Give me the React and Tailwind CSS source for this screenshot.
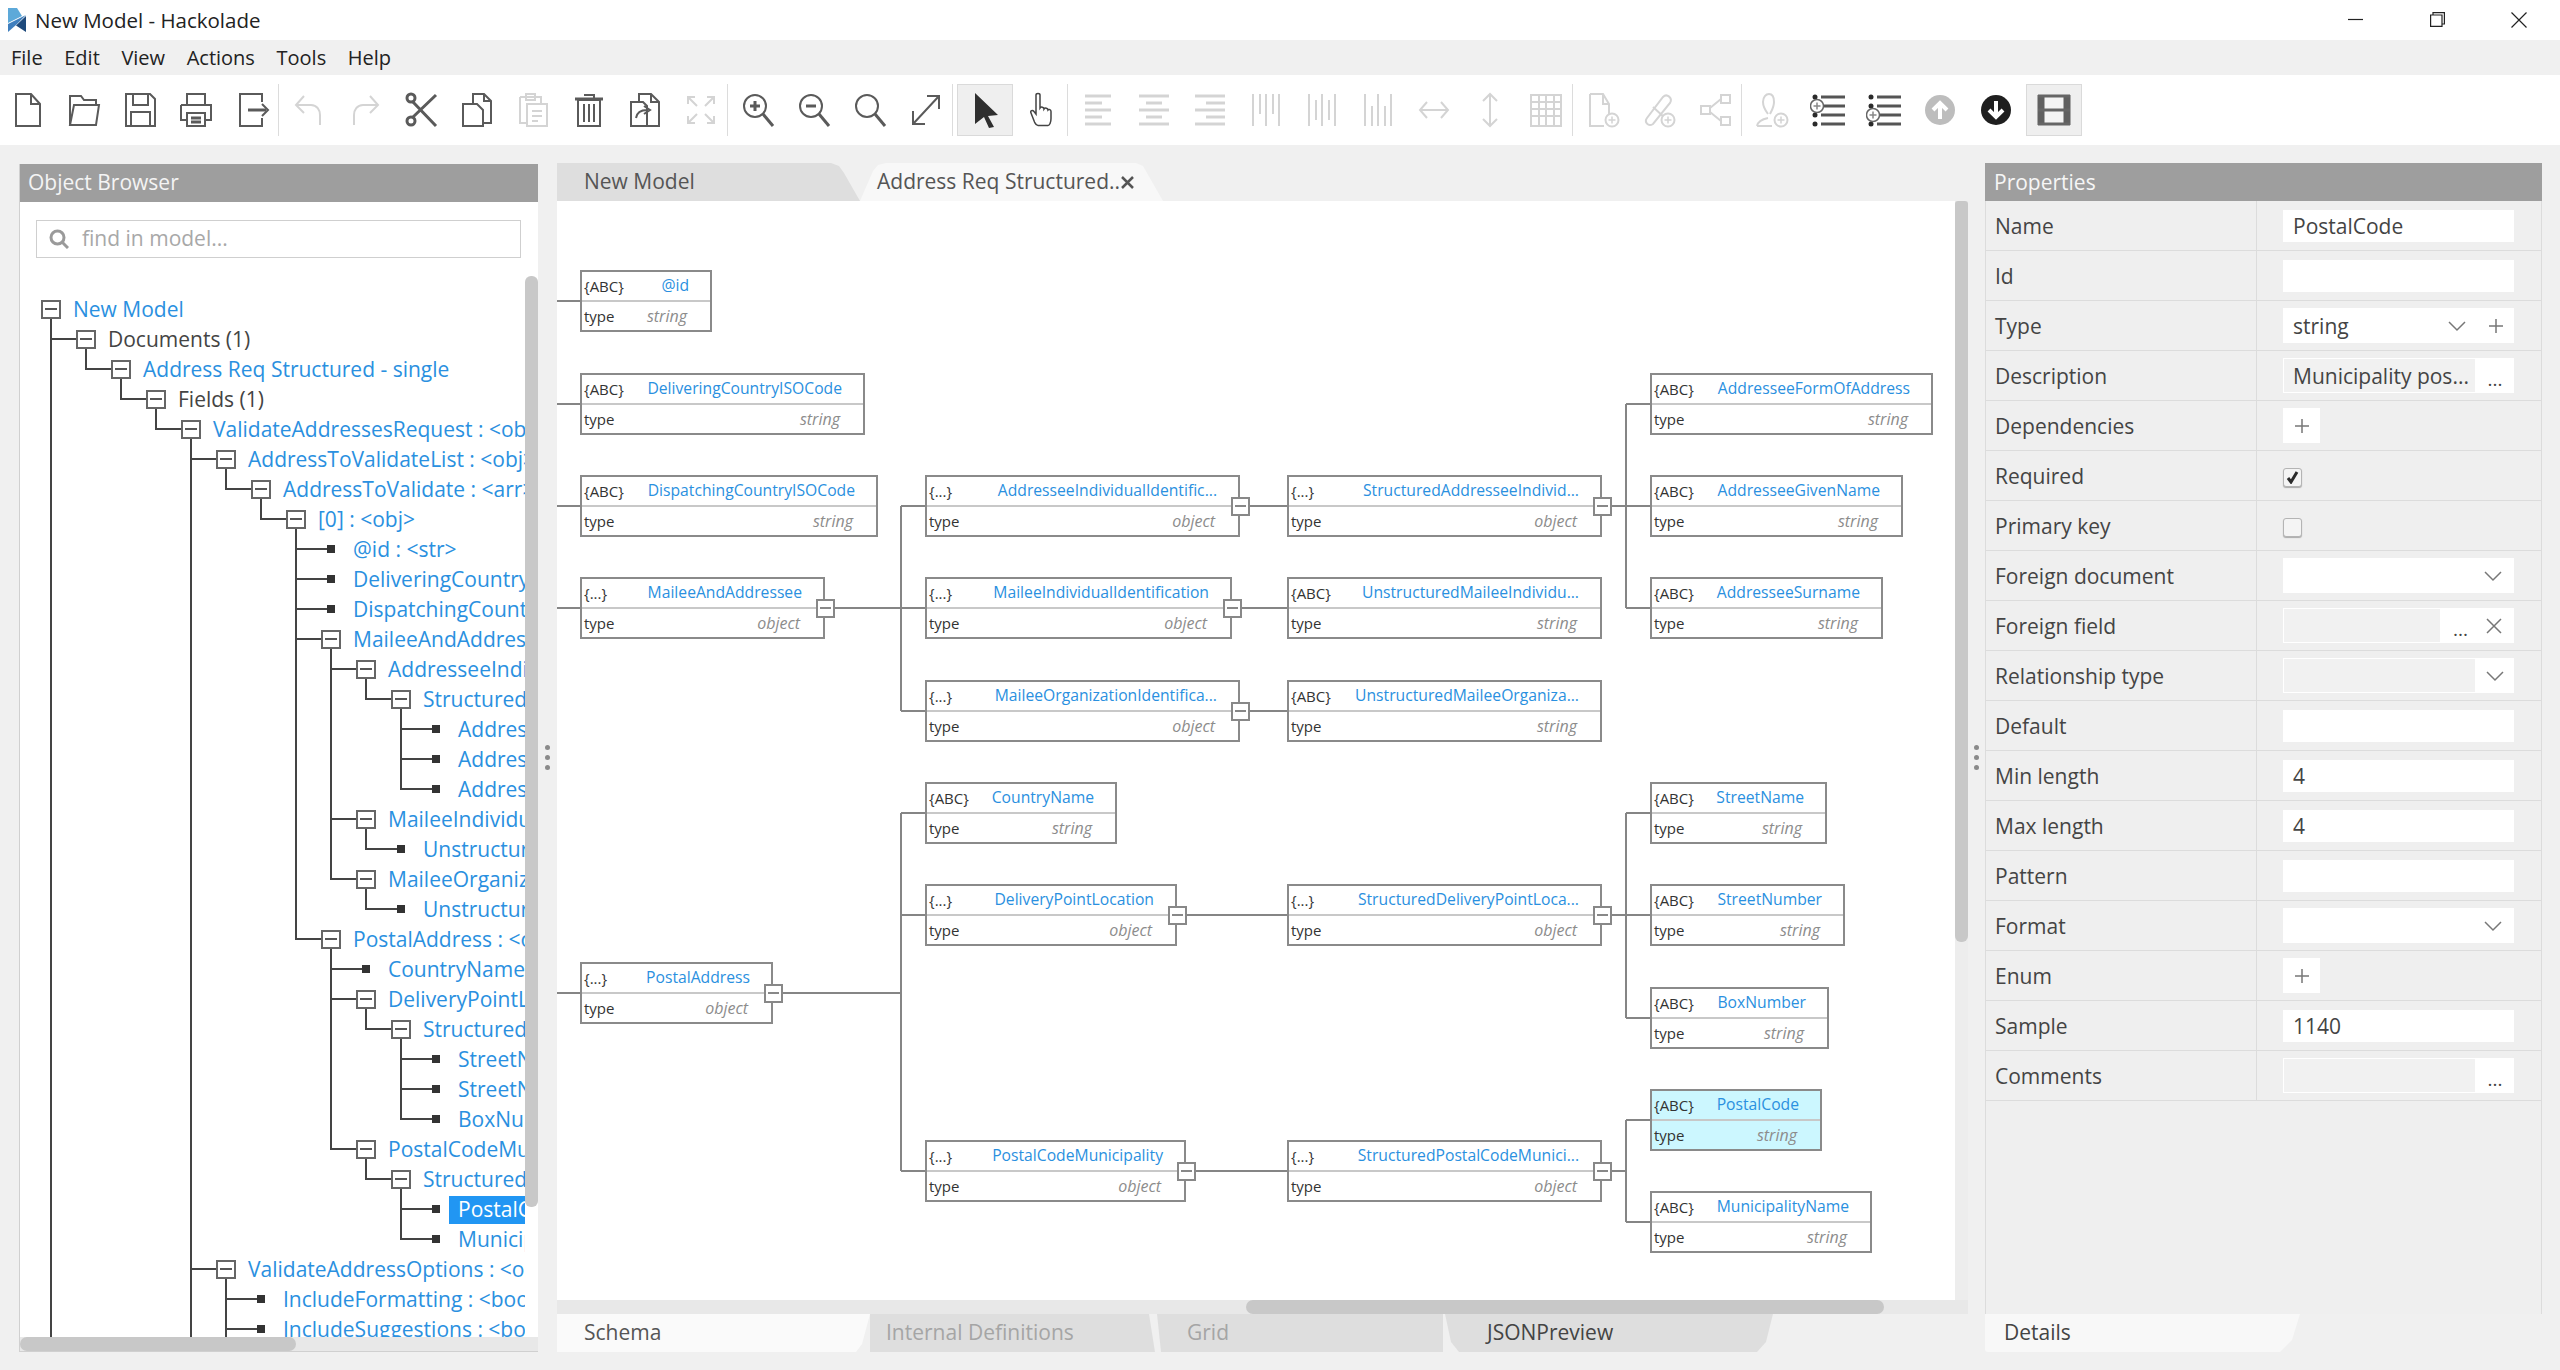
import React from 'react';

const ON = '#5a5a5a';
const OFF = '#d4d4d4';

const Ico = ({ children, c = ON, w = 2 }) => (
  <svg width="36" height="36" viewBox="0 0 36 36" fill="none" stroke={c} strokeWidth={w}>
    {children}
  </svg>
);

const bars = (rows) => rows.map(([x1, x2, y], i) => <path key={i} d={`M${x1} ${y}H${x2}`} />);

const AddDot = ({ c = OFF }) => (
  <>
    <circle cx="27" cy="28" r="6.5" fill="#fff" />
    <path d="M27 24.5v7M23.5 28h7" stroke={c} strokeWidth="1.5" />
  </>
);

const ListIcon = ({ y }) => (
  <svg width="36" height="36" viewBox="0 0 36 36" fill="none">
    <path d="M11 5h24M11 14h24M11 23h24M11 32h24" stroke="#555" strokeWidth="3" />
    <circle cx="5" cy="5" r="2.5" fill="#2a2a2a" />
    <circle cx="5" cy="14" r="2.5" fill="#2a2a2a" />
    <circle cx="5" cy="23" r="2.5" fill="#2a2a2a" />
    <circle cx="5" cy="32" r="2.5" fill="#2a2a2a" />
    <circle cx="7" cy={y} r="6.5" fill="#fff" stroke="#666" strokeWidth="1.5" />
    <path d={`M3.5 ${y}h7M7 ${y - 3.5}v7`} stroke="#888" strokeWidth="1.5" />
  </svg>
);

const icons = {
  file: <Ico><path d="M6 2h15l9 10v22H6z" /><path d="M21 2v10h9" /></Ico>,
  folder: <Ico><path d="M4 33V4h11l3 4h12v5" /><path d="M4 33h26l3-20H8z" fill="none" /></Ico>,
  save: <Ico><path d="M4 2h24l5 5v27H4z" /><path d="M11 2v11h15V2" /><path d="M9 34V20h19v14" /></Ico>,
  print: <Ico><path d="M9 13V2h18v11" /><path d="M3 13h30v15h-6M9 28H3V13" /><path d="M9 21h18v13H9z" /><path d="M13 26h10M13 30h10" strokeWidth="3" /></Ico>,
  exportDoc: <Ico><path d="M28 10V2H6v32h22v-8" /><path d="M14 18h18" strokeWidth="3" /><path d="M28 12l6 6-6 6" /></Ico>,
  undo: <Ico c={OFF}><path d="M13 4L5 13l8 8" /><path d="M5 13h15c6 0 9 5 9 10v10" /></Ico>,
  redo: <Ico c={OFF}><path d="M23 4l8 9-8 8" /><path d="M31 13H16c-6 0-9 5-9 10v10" /></Ico>,
  cut: <Ico w={3}><circle cx="8" cy="6" r="4" /><circle cx="8" cy="29" r="4" /><path d="M10 10l23 24M10 25L33 3" /></Ico>,
  copy: <Ico><path d="M4 12h14l6 6v16H4z" /><path d="M14 12V2h11l7 7v22h-8" /><path d="M25 2v7h7" /></Ico>,
  paste: <Ico c={OFF}><path d="M5 5h21v6M5 5v26h7" /><path d="M11 2h9v6h-9z" /><path d="M12 12h20v22H12z" /><path d="M17 19h10M17 24h10M17 29h6" /></Ico>,
  trash: <Ico><path d="M7 8h22v26H7z" /><path d="M4 7h28" strokeWidth="3" /><path d="M13 3h10v4M13 12v18M18 12v18M23 12v18" /></Ico>,
  pasteSpecial: <Ico><path d="M4 10h12l4 4v20H4z" /><path d="M12 10V2h12l8 8v24H20" /><path d="M24 2v8h8" /><path d="M9 26c1-6 6-8 11-8M17 14l6 4-6 4" /></Ico>,
  fit: <Ico c={OFF}><path d="M5 5l9 9M5 12V5h7M31 5l-9 9M31 12V5h-7M5 31l9-9M5 24v7h7M31 31l-9-9M31 24v7h-7" /></Ico>,
  zoomIn: <Ico><circle cx="15" cy="14" r="11" /><path d="M23 22l10 12" strokeWidth="3" /><path d="M15 9v10M10 14h10" strokeWidth="3" /></Ico>,
  zoomOut: <Ico><circle cx="15" cy="14" r="11" /><path d="M23 22l10 12" strokeWidth="3" /><path d="M10 14h10" strokeWidth="3" /></Ico>,
  search: <Ico><circle cx="15" cy="14" r="11" /><path d="M23 22l10 12" strokeWidth="3" /></Ico>,
  expand: <Ico><path d="M5 32L31 4M19 4h12v13M5 19v13h12" /></Ico>,
  arrow: <svg width="36" height="36" viewBox="0 0 36 36"><path d="M8 1l23 22-10 1 6 11-5 1-5-11-9 7z" fill="#2f2f2f" /></svg>,
  hand: <Ico c="#444" w={1.5}><path d="M13 3c0-2 4-2 4 0v13c1-1.500 4-1 4 1 1-1.500 4-1 4 1 1-1 3-.5 3 1.500v7c0 4-1.500 7-3 7H15c-2 0-2.500-1.500-3.500-3.500L8 21c-1-2.500 1.500-3.500 3-1.500l2 2.500z" /></Ico>,
  alignLeft: <Ico c={OFF} w={3}>{bars([[5, 31, 4], [5, 22, 11], [5, 31, 18], [5, 22, 25], [5, 31, 32]])}</Ico>,
  alignCenter: <Ico c={OFF} w={3}>{bars([[3, 33, 4], [10, 26, 11], [3, 33, 18], [10, 26, 25], [3, 33, 32]])}</Ico>,
  alignRight: <Ico c={OFF} w={3}>{bars([[3, 33, 4], [14, 33, 11], [3, 33, 18], [14, 33, 25], [3, 33, 32]])}</Ico>,
  topAlign: <Ico c={OFF}><path d="M5 2v32M12 2v20M18 2v32M25 2v20M31 2v32" /></Ico>,
  midAlign: <Ico c={OFF}><path d="M5 2v32M12 8v20M18 2v32M25 8v20M31 2v32" /></Ico>,
  botAlign: <Ico c={OFF}><path d="M5 2v32M12 14v20M18 2v32M25 14v20M31 2v32" /></Ico>,
  widthEq: <Ico c={OFF}><path d="M4 18h28M11 10l-7 8 7 8M25 10l7 8-7 8" /></Ico>,
  heightEq: <Ico c={OFF}><path d="M18 2v32M11 9l7-7 7 7M11 27l7 7 7-7" /></Ico>,
  grid: <Ico c={OFF}><path d="M3 3h30v31H3zM3 10h30M3 17h30M3 24h30M11 3v31M18 3v31M26 3v31" /></Ico>,
  docAdd: <Ico c={OFF}><path d="M5 2h13l6 10v14M5 2v32h14" /><path d="M18 2v10h6" /><AddDot /></Ico>,
  linkAdd: <Ico c={OFF}><path d="M6 26L22 5c4-4 10 1 7 6L12 32c-5 3-9-2-6-6z" /><path d="M12 15l12 11" /><AddDot /></Ico>,
  shareNodes: <Ico c={OFF}><path d="M4 14h9v8H4zM24 3h9v8h-9zM24 25h9v8h-9z" /><path d="M13 16l11-9M13 20l11 9" /></Ico>,
  userAdd: <Ico c={OFF}><path d="M14 22c-3-4-5-8-5-12 0-5 3-8 6-8s5 3 5 8-2 8-4 12M3 34c1-5 6-7 11-8M3 34h15" /><AddDot /></Ico>,
  listTop: <ListIcon y={14} />,
  listBot: <ListIcon y={23} />,
  up: <svg width="36" height="36" viewBox="0 0 36 36"><circle cx="18" cy="18" r="15" fill="#bdbdbd" /><path d="M18 27V12M11 18l7-7 7 7" stroke="#fff" strokeWidth="4" fill="none" /></svg>,
  down: <svg width="36" height="36" viewBox="0 0 36 36"><circle cx="18" cy="18" r="15" fill="#1f1f1f" /><path d="M18 9v15M11 18l7 7 7-7" stroke="#fff" strokeWidth="4" fill="none" /></svg>,
  layout: (
    <svg width="36" height="36" viewBox="0 0 36 36" fill="none">
      <path d="M5 5h26v27H5z" fill="#f4f4f4" />
      <path d="M5 3v30M31 3v30" stroke="#606060" strokeWidth="7" />
      <path d="M2 4h32M2 32h32M2 18h32" stroke="#666" strokeWidth="3" />
    </svg>
  ),
};

const toolbar = [
  ['file', 'folder', 'save', 'print', 'exportDoc'],
  ['undo', 'redo', 'cut', 'copy', 'paste', 'trash', 'pasteSpecial', 'fit'],
  ['zoomIn', 'zoomOut', 'search', 'expand'],
  ['arrow', 'hand'],
  ['alignLeft', 'alignCenter', 'alignRight', 'topAlign', 'midAlign', 'botAlign', 'widthEq', 'heightEq', 'grid'],
  ['docAdd', 'linkAdd', 'shareNodes'],
  ['userAdd', 'listTop', 'listBot', 'up', 'down', 'layout'],
];
const activeTools = ['arrow', 'layout'];

const Toolbar = () => (
  <div className="flex h-[70px] items-center bg-white">
    {toolbar.map((group, g) => (
      <React.Fragment key={g}>
        {g > 0 && <div className="-ml-[2px] mr-[2px] h-[52px] w-px bg-[#dcdcdc]" />}
        {group.map((name) => (
          <div
            key={name}
            className={
              activeTools.includes(name)
                ? 'ml-[2px] flex h-[52px] w-[56px] items-center justify-center border border-[#dadada] bg-[#efefef]'
                : 'flex h-[52px] w-[56px] items-center justify-center'
            }
          >
            {icons[name]}
          </div>
        ))}
      </React.Fragment>
    ))}
  </div>
);

const treeRows = [
  [0, 'New Model'],
  [1, 'Documents (1)', true],
  [2, 'Address Req Structured - single'],
  [3, 'Fields (1)', true],
  [4, 'ValidateAddressesRequest : <obj>'],
  [5, 'AddressToValidateList : <obj>'],
  [6, 'AddressToValidate : <arr>'],
  [7, '[0] : <obj>'],
  [8, '@id : <str>'],
  [8, 'DeliveringCountryISOCode : <str>'],
  [8, 'DispatchingCountryISOCode : <str>'],
  [8, 'MaileeAndAddressee : <obj>'],
  [9, 'AddresseeIndividualIdentification'],
  [10, 'StructuredAddresseeIndividual'],
  [11, 'AddresseeFormOfAddress'],
  [11, 'AddresseeGivenName'],
  [11, 'AddresseeSurname'],
  [9, 'MaileeIndividualIdentification'],
  [10, 'UnstructuredMaileeIndividual'],
  [9, 'MaileeOrganizationIdentification'],
  [10, 'UnstructuredMaileeOrganization'],
  [8, 'PostalAddress : <obj>'],
  [9, 'CountryName : <str>'],
  [9, 'DeliveryPointLocation : <obj>'],
  [10, 'StructuredDeliveryPointLocation'],
  [11, 'StreetName : <str>'],
  [11, 'StreetNumber : <str>'],
  [11, 'BoxNumber : <str>'],
  [9, 'PostalCodeMunicipality : <obj>'],
  [10, 'StructuredPostalCodeMunicipality'],
  [11, 'PostalCode : <str>'],
  [11, 'MunicipalityName : <str>'],
  [5, 'ValidateAddressOptions : <obj>'],
  [6, 'IncludeFormatting : <bool>'],
  [6, 'IncludeSuggestions : <bool>'],
];
const SELECTED = 30;
const TREE_H = 1062;
const rowY = (i) => 33 + 30 * i;
const levelX = (l) => 31 + 35 * l;
const isBranch = (i) => i < treeRows.length - 1 && treeRows[i + 1][0] > treeRows[i][0];

const TreeLines = () => {
  const out = [];
  treeRows.forEach(([lvl], i) => {
    const x = levelX(lvl);
    const y = rowY(i);
    if (lvl > 0) {
      let p = i - 1;
      while (treeRows[p][0] !== lvl - 1) p--;
      const px = levelX(lvl - 1);
      out.push(<path key={`v${i}`} d={`M${px} ${rowY(p)}V${y}H${x}`} stroke="#444" strokeWidth="2" fill="none" />);
    }
  });
  [0, 4, 32].forEach((i) => {
    const x = levelX(treeRows[i][0]);
    out.push(<path key={`c${i}`} d={`M${x} ${rowY(i)}V${TREE_H}`} stroke="#444" strokeWidth="2" />);
  });
  treeRows.forEach(([lvl], i) => {
    const x = levelX(lvl);
    const y = rowY(i);
    if (isBranch(i)) {
      out.push(
        <g key={`b${i}`}>
          <rect x={x - 9} y={y - 8} width="18" height="17" fill="#fff" stroke="#666" strokeWidth="2" />
          <path d={`M${x - 6} ${y}h12`} stroke="#555" strokeWidth="2" />
        </g>
      );
    } else {
      out.push(<rect key={`l${i}`} x={x - 4} y={y - 4} width="8" height="8" fill="#333" />);
    }
  });
  return (
    <svg className="absolute left-0 top-0" width="505" height={TREE_H}>
      {out}
    </svg>
  );
};

const ObjectBrowser = () => (
  <div className="mt-px flex w-[519px] flex-col border-b border-l border-[#d0d0d0] bg-white">
    <div className="flex h-[38px] items-center bg-[#9e9e9e] pl-[8px] text-[21px] text-[#f4f4f4]">Object Browser</div>
    <div className="h-[74px] px-[16px] pt-[18px]">
      <div className="flex h-[38px] w-[485px] items-center border border-[#cfcfcf] pl-[12px]">
        <svg width="20" height="20" viewBox="0 0 20 20" fill="none" stroke="#9a9a9a" strokeWidth="3">
          <circle cx="8.5" cy="8.5" r="6.5" />
          <path d="M13 13l6 6" />
        </svg>
        <span className="ml-[13px] text-[21px] text-[#a8a8a8]">find in model...</span>
      </div>
    </div>
    <div className="flex min-h-0 flex-1">
      <div className="relative flex-1 overflow-hidden pt-[18px]">
        <TreeLines />
        {treeRows.map(([lvl, label, plain], i) => (
          <div
            key={i}
            className="relative flex h-[30px] items-center whitespace-nowrap pt-px text-[21px]"
            style={{ paddingLeft: 53 + 35 * lvl }}
          >
            <span
              className={
                i === SELECTED
                  ? '-ml-[9px] flex h-[28px] w-[200px] items-center bg-[#2196f3] pl-[9px] text-white'
                  : plain
                  ? 'text-[#444]'
                  : 'text-[#2a90e0]'
              }
            >
              {label}
            </span>
          </div>
        ))}
      </div>
      <div className="mb-[130px] w-[13px] rounded-b-[6px] rounded-t-[6px] bg-[#c8c8c8]" />
    </div>
    <div className="flex h-[14px] bg-[#e8e8e8]">
      <div className="w-[276px] rounded-[7px] bg-[#c8c8c8]" />
    </div>
  </div>
);

const Splitter = ({ w }) => (
  <div className={`flex flex-col items-center justify-center gap-[5px] ${w}`}>
    <div className="h-[5px] w-[5px] rounded-full bg-[#8a8a8a]" />
    <div className="h-[5px] w-[5px] rounded-full bg-[#8a8a8a]" />
    <div className="h-[5px] w-[5px] rounded-full bg-[#8a8a8a]" />
  </div>
);

const nodes = [
  { t: '{ABC}', n: '@id', v: 'string', c: 'left-[23px] top-[69px] w-[132px]' },
  { t: '{ABC}', n: 'DeliveringCountryISOCode', v: 'string', c: 'left-[23px] top-[172px] w-[285px]' },
  { t: '{ABC}', n: 'DispatchingCountryISOCode', v: 'string', c: 'left-[23px] top-[274px] w-[298px]' },
  { t: '{...}', n: 'MaileeAndAddressee', v: 'object', c: 'left-[23px] top-[376px] w-[245px]' },
  { t: '{...}', n: 'AddresseeIndividualIdentific...', v: 'object', c: 'left-[368px] top-[274px] w-[315px]' },
  { t: '{...}', n: 'MaileeIndividualIdentification', v: 'object', c: 'left-[368px] top-[376px] w-[307px]' },
  { t: '{...}', n: 'MaileeOrganizationIdentifica...', v: 'object', c: 'left-[368px] top-[479px] w-[315px]' },
  { t: '{...}', n: 'StructuredAddresseeIndivid...', v: 'object', c: 'left-[730px] top-[274px] w-[315px]' },
  { t: '{ABC}', n: 'UnstructuredMaileeIndividu...', v: 'string', c: 'left-[730px] top-[376px] w-[315px]' },
  { t: '{ABC}', n: 'UnstructuredMaileeOrganiza...', v: 'string', c: 'left-[730px] top-[479px] w-[315px]' },
  { t: '{ABC}', n: 'AddresseeFormOfAddress', v: 'string', c: 'left-[1093px] top-[172px] w-[283px]' },
  { t: '{ABC}', n: 'AddresseeGivenName', v: 'string', c: 'left-[1093px] top-[274px] w-[253px]' },
  { t: '{ABC}', n: 'AddresseeSurname', v: 'string', c: 'left-[1093px] top-[376px] w-[233px]' },
  { t: '{ABC}', n: 'CountryName', v: 'string', c: 'left-[368px] top-[581px] w-[192px]' },
  { t: '{...}', n: 'DeliveryPointLocation', v: 'object', c: 'left-[368px] top-[683px] w-[252px]' },
  { t: '{...}', n: 'StructuredDeliveryPointLoca...', v: 'object', c: 'left-[730px] top-[683px] w-[315px]' },
  { t: '{ABC}', n: 'StreetName', v: 'string', c: 'left-[1093px] top-[581px] w-[177px]' },
  { t: '{ABC}', n: 'StreetNumber', v: 'string', c: 'left-[1093px] top-[683px] w-[195px]' },
  { t: '{ABC}', n: 'BoxNumber', v: 'string', c: 'left-[1093px] top-[786px] w-[179px]' },
  { t: '{...}', n: 'PostalAddress', v: 'object', c: 'left-[23px] top-[761px] w-[193px]' },
  { t: '{...}', n: 'PostalCodeMunicipality', v: 'object', c: 'left-[368px] top-[939px] w-[261px]' },
  { t: '{...}', n: 'StructuredPostalCodeMunici...', v: 'object', c: 'left-[730px] top-[939px] w-[315px]' },
  { t: '{ABC}', n: 'PostalCode', v: 'string', c: 'left-[1093px] top-[888px] w-[172px]', on: true },
  { t: '{ABC}', n: 'MunicipalityName', v: 'string', c: 'left-[1093px] top-[990px] w-[222px]' },
];

const Node = ({ t, n, v, c, on }) => (
  <div className={`absolute h-[62px] border-2 border-[#8a8a8a] ${on ? 'bg-[#ccf7ff]' : 'bg-white'} ${c}`}>
    <div className="flex h-[30px] items-center justify-between whitespace-nowrap border-b-2 border-[#c8c8c8] pl-[2px] pr-[21px]">
      <span className="text-[15px] text-[#333]">{t}</span>
      <span className="text-[15.7px] text-[#2a90e0]">{n}</span>
    </div>
    <div className="flex h-[28px] items-center justify-between pl-[2px] pr-[23px]">
      <span className="text-[15px] text-[#333]">type</span>
      <span className="text-[16px] italic text-[#8c8c8c]">{v}</span>
    </div>
  </div>
);

const links = [
  'M0 100H23', 'M0 203H23', 'M0 305H23', 'M0 407H23', 'M0 792H23',
  'M268 407H368', 'M344 305V510', 'M344 305H368', 'M344 510H368',
  'M683 305H730', 'M675 407H730', 'M683 510H730',
  'M1045 305H1093', 'M1069 203V407', 'M1069 203H1093', 'M1069 407H1093',
  'M216 792H344', 'M344 612V970', 'M344 612H368', 'M344 714H368', 'M344 970H368',
  'M620 714H730', 'M629 970H730',
  'M1045 714H1093', 'M1069 612V817', 'M1069 612H1093', 'M1069 817H1093',
  'M1045 970H1069', 'M1069 919V1021', 'M1069 919H1093', 'M1069 1021H1093',
];
const toggles = [[268, 407], [683, 305], [675, 407], [683, 510], [1045, 305], [216, 792], [620, 714], [629, 970], [1045, 714], [1045, 970]];

const Links = () => (
  <svg className="absolute left-0 top-0" width="1398" height="1099">
    {links.map((d) => (
      <path key={d} d={d} stroke="#858585" strokeWidth="2" fill="none" />
    ))}
    {toggles.map(([x, y]) => (
      <g key={`${x}-${y}`}>
        <rect x={x - 8} y={y - 8} width="17" height="17" fill="#fff" stroke="#888" strokeWidth="2" />
        <path d={`M${x - 5} ${y}h11`} stroke="#888" strokeWidth="2" />
      </g>
    ))}
  </svg>
);

const Canvas = () => (
  <div className="flex w-[1411px] flex-col">
    <div className="flex h-[38px] text-[21px]">
      <div className="flex w-[303px] items-center bg-[#dedede] pl-[27px] text-[#555] [clip-path:polygon(0_0,274px_0,282px_3px,287px_10px,303px_100%,0_100%)]">
        New Model
      </div>
      <div className="flex w-[303px] items-center bg-[#f8f8f8] pl-[17px] text-[#555] [clip-path:polygon(0_100%,13px_8px,18px_2px,26px_0,276px_0,283px_3px,287px_10px,303px_100%)]">
        <span>Address Req Structured..</span>
        <svg className="ml-[1px]" width="13" height="13" viewBox="0 0 13 13" stroke="#555" strokeWidth="2.5">
          <path d="M1 1l11 11M12 1L1 12" />
        </svg>
      </div>
    </div>
    <div className="flex min-h-0 flex-1">
      <div className="relative w-[1398px] overflow-hidden bg-white">
        {nodes.map((node) => (
          <Node key={node.n} {...node} />
        ))}
        <Links />
      </div>
      <div className="flex w-[13px] flex-col bg-[#ededed]">
        <div className="h-[741px] rounded-b-[6px] rounded-t-[3px] bg-[#c8c8c8]" />
      </div>
    </div>
    <div className="flex h-[14px] bg-[#e8e8e8] pl-[689px]">
      <div className="w-[638px] rounded-[7px] bg-[#c8c8c8]" />
    </div>
    <div className="flex h-[38px] text-[21px]">
      <div className="flex w-[313px] items-center bg-[#fafafa] pl-[27px] text-[#555] [clip-path:polygon(0_0,100%_0,calc(100%-8px)_30px,calc(100%-14px)_100%,0_100%)]">
        Schema
      </div>
      <div className="flex w-[285px] items-center bg-[#dedede] pl-[16px] text-[#a5a5a5] [clip-path:polygon(0_0,calc(100%-6px)_0,100%_100%,-12px_100%)]">
        Internal Definitions
      </div>
      <div className="flex w-[288px] items-center bg-[#dedede] pl-[32px] text-[#a5a5a5] [clip-path:polygon(2px_0,100%_0,calc(100%+4px)_100%,6px_100%)]">
        Grid
      </div>
      <div className="flex w-[330px] items-center bg-[#dedede] pl-[44px] text-[#444] [clip-path:polygon(2px_0,100%_0,calc(100%-7px)_28px,calc(100%-16px)_100%,16px_100%,8px_28px)]">
        JSONPreview
      </div>
    </div>
  </div>
);

const Chevron = () => (
  <svg width="18" height="12" viewBox="0 0 18 12" fill="none" stroke="#777" strokeWidth="1.5">
    <path d="M1 2l8 8 8-8" />
  </svg>
);
const Plus = () => (
  <svg width="16" height="16" viewBox="0 0 16 16" fill="none" stroke="#777" strokeWidth="1.5">
    <path d="M8 1v14M1 8h14" />
  </svg>
);
const Dots = () => <span className="flex h-full items-end pb-[4px] text-[19px] leading-none text-[#444]">...</span>;

const Box = ({ children }) => (
  <div className="flex h-[35px] w-[231px] items-center bg-white pl-[10px]">{children}</div>
);
const TextInput = ({ value, h = 'h-[32px]' }) => (
  <div className={`flex w-[231px] items-center bg-white pl-[10px] pt-[2px] ${h}`}>{value}</div>
);
const GrayField = ({ value, right, inner = 'w-[193px]' }) => (
  <div className="flex h-[35px] w-[231px] bg-white">
    <div className={`flex h-full items-center overflow-hidden whitespace-nowrap border border-white bg-[#f1f1f1] pl-[9px] pt-[2px] ${inner}`}>{value}</div>
    <div className="flex flex-1 items-center justify-center gap-[18px]">{right}</div>
  </div>
);
const Check = ({ checked }) => (
  <div className="mt-[3px] flex h-[19px] w-[19px] items-center justify-center rounded-[3px] border border-[#b4b4b4] bg-[#f4f4f4] shadow-[0_1px_1px_#aaa]">
    {checked && (
      <svg width="13" height="13" viewBox="0 0 13 13" fill="none" stroke="#2c2c2c" strokeWidth="3">
        <path d="M2 7l3 4 6-10" />
      </svg>
    )}
  </div>
);
const AddBtn = () => (
  <div className="flex h-[35px] w-[37px] items-center justify-center bg-white">
    <Plus />
  </div>
);

const props = [
  ['Name', <TextInput value="PostalCode" />],
  ['Id', <TextInput />],
  ['Type', (
    <Box>
      <span className="pt-[2px]">string</span>
      <span className="ml-auto mr-[22px] flex items-center"><Chevron /></span>
      <span className="mr-[10px] flex items-center"><Plus /></span>
    </Box>
  )],
  ['Description', <GrayField value="Municipality pos..." right={<Dots />} />],
  ['Dependencies', <AddBtn />],
  ['Required', <Check checked />],
  ['Primary key', <Check />],
  ['Foreign document', <Box><span className="ml-auto mr-[12px] flex"><Chevron /></span></Box>],
  ['Foreign field', (
    <GrayField
      inner="w-[158px]"
      right={
        <>
          <Dots />
          <svg width="16" height="16" viewBox="0 0 16 16" fill="none" stroke="#777" strokeWidth="1.5"><path d="M1 1l14 14M15 1L1 15" /></svg>
        </>
      }
    />
  )],
  ['Relationship type', <GrayField right={<Chevron />} />],
  ['Default', <TextInput />],
  ['Min length', <TextInput value="4" />],
  ['Max length', <TextInput value="4" />],
  ['Pattern', <TextInput />],
  ['Format', <Box><span className="ml-auto mr-[12px] flex"><Chevron /></span></Box>],
  ['Enum', <AddBtn />],
  ['Sample', <TextInput value="1140" />],
  ['Comments', <GrayField right={<Dots />} />],
];

const Properties = () => (
  <div className="flex w-[557px] flex-col text-[21px] text-[#444]">
    <div className="flex h-[38px] items-center bg-[#9e9e9e] pl-[9px] pt-[1px] text-[#f6f6f6]">Properties</div>
    <div className="flex-1 border-x border-[#dcdcdc] bg-[#efefef]">
      {props.map(([label, field]) => (
        <div key={label} className="flex h-[50px] border-b border-[#dcdcdc]">
          <div className="flex w-[271px] items-center border-r border-[#dcdcdc] pl-[9px] pt-[2px]">{label}</div>
          <div className="flex flex-1 items-center pl-[26px]">{field}</div>
        </div>
      ))}
    </div>
    <div className="flex h-[38px] w-[315px] items-center rounded-bl-[3px] bg-[#f8f8f8] pl-[19px] [clip-path:polygon(0_0,100%_0,calc(100%-8px)_26px,calc(100%-20px)_100%,0_100%)]">
      Details
    </div>
  </div>
);

const Logo = () => (
  <svg width="18" height="24" viewBox="0 0 18 24">
    <path d="M0 0h9l5 8L0 15z" fill="#5da9d9" />
    <path d="M0 16L18 7 8 17 0 24z" fill="#3f7fbe" />
    <path d="M8 17.500L18 8v16z" fill="#1e4a7c" />
  </svg>
);

export default function App() {
  return (
    <div className="flex h-[1370px] w-[2560px] flex-col overflow-hidden bg-[#f0f0f0] font-['Open_Sans',sans-serif] text-[#444]">
      <div className="flex h-[40px] items-center bg-white pl-[8px] text-[20.5px] text-[#222]">
        <Logo />
        <span className="ml-[9px]">New Model - Hackolade</span>
        <div className="ml-auto flex">
          <div className="flex w-[82px] justify-center">
            <svg width="15" height="15" viewBox="0 0 15 15" stroke="#222" strokeWidth="1.2"><path d="M0 7.5h15" /></svg>
          </div>
          <div className="flex w-[82px] justify-center">
            <svg width="15" height="15" viewBox="0 0 15 15" fill="none" stroke="#222" strokeWidth="1.2"><path d="M3 3V.6h11.4V12H12" /><path d="M.6 3h11.4v11.4H.6z" /></svg>
          </div>
          <div className="flex w-[82px] justify-center">
            <svg width="16" height="16" viewBox="0 0 16 16" fill="none" stroke="#222" strokeWidth="1.2"><path d="M.5.5l15 15M15.5.5l-15 15" /></svg>
          </div>
        </div>
      </div>
      <div className="flex h-[35px] items-center gap-[21.6px] bg-[#f0f0f0] pl-[11px] text-[20px] text-[#222]">
        <span>File</span>
        <span>Edit</span>
        <span>View</span>
        <span>Actions</span>
        <span>Tools</span>
        <span>Help</span>
      </div>
      <Toolbar />
      <div className="flex min-h-0 flex-1 pb-[18px] pl-[19px] pt-[18px]">
        <ObjectBrowser />
        <Splitter w="w-[19px]" />
        <Canvas />
        <Splitter w="w-[17px]" />
        <Properties />
      </div>
    </div>
  );
}
